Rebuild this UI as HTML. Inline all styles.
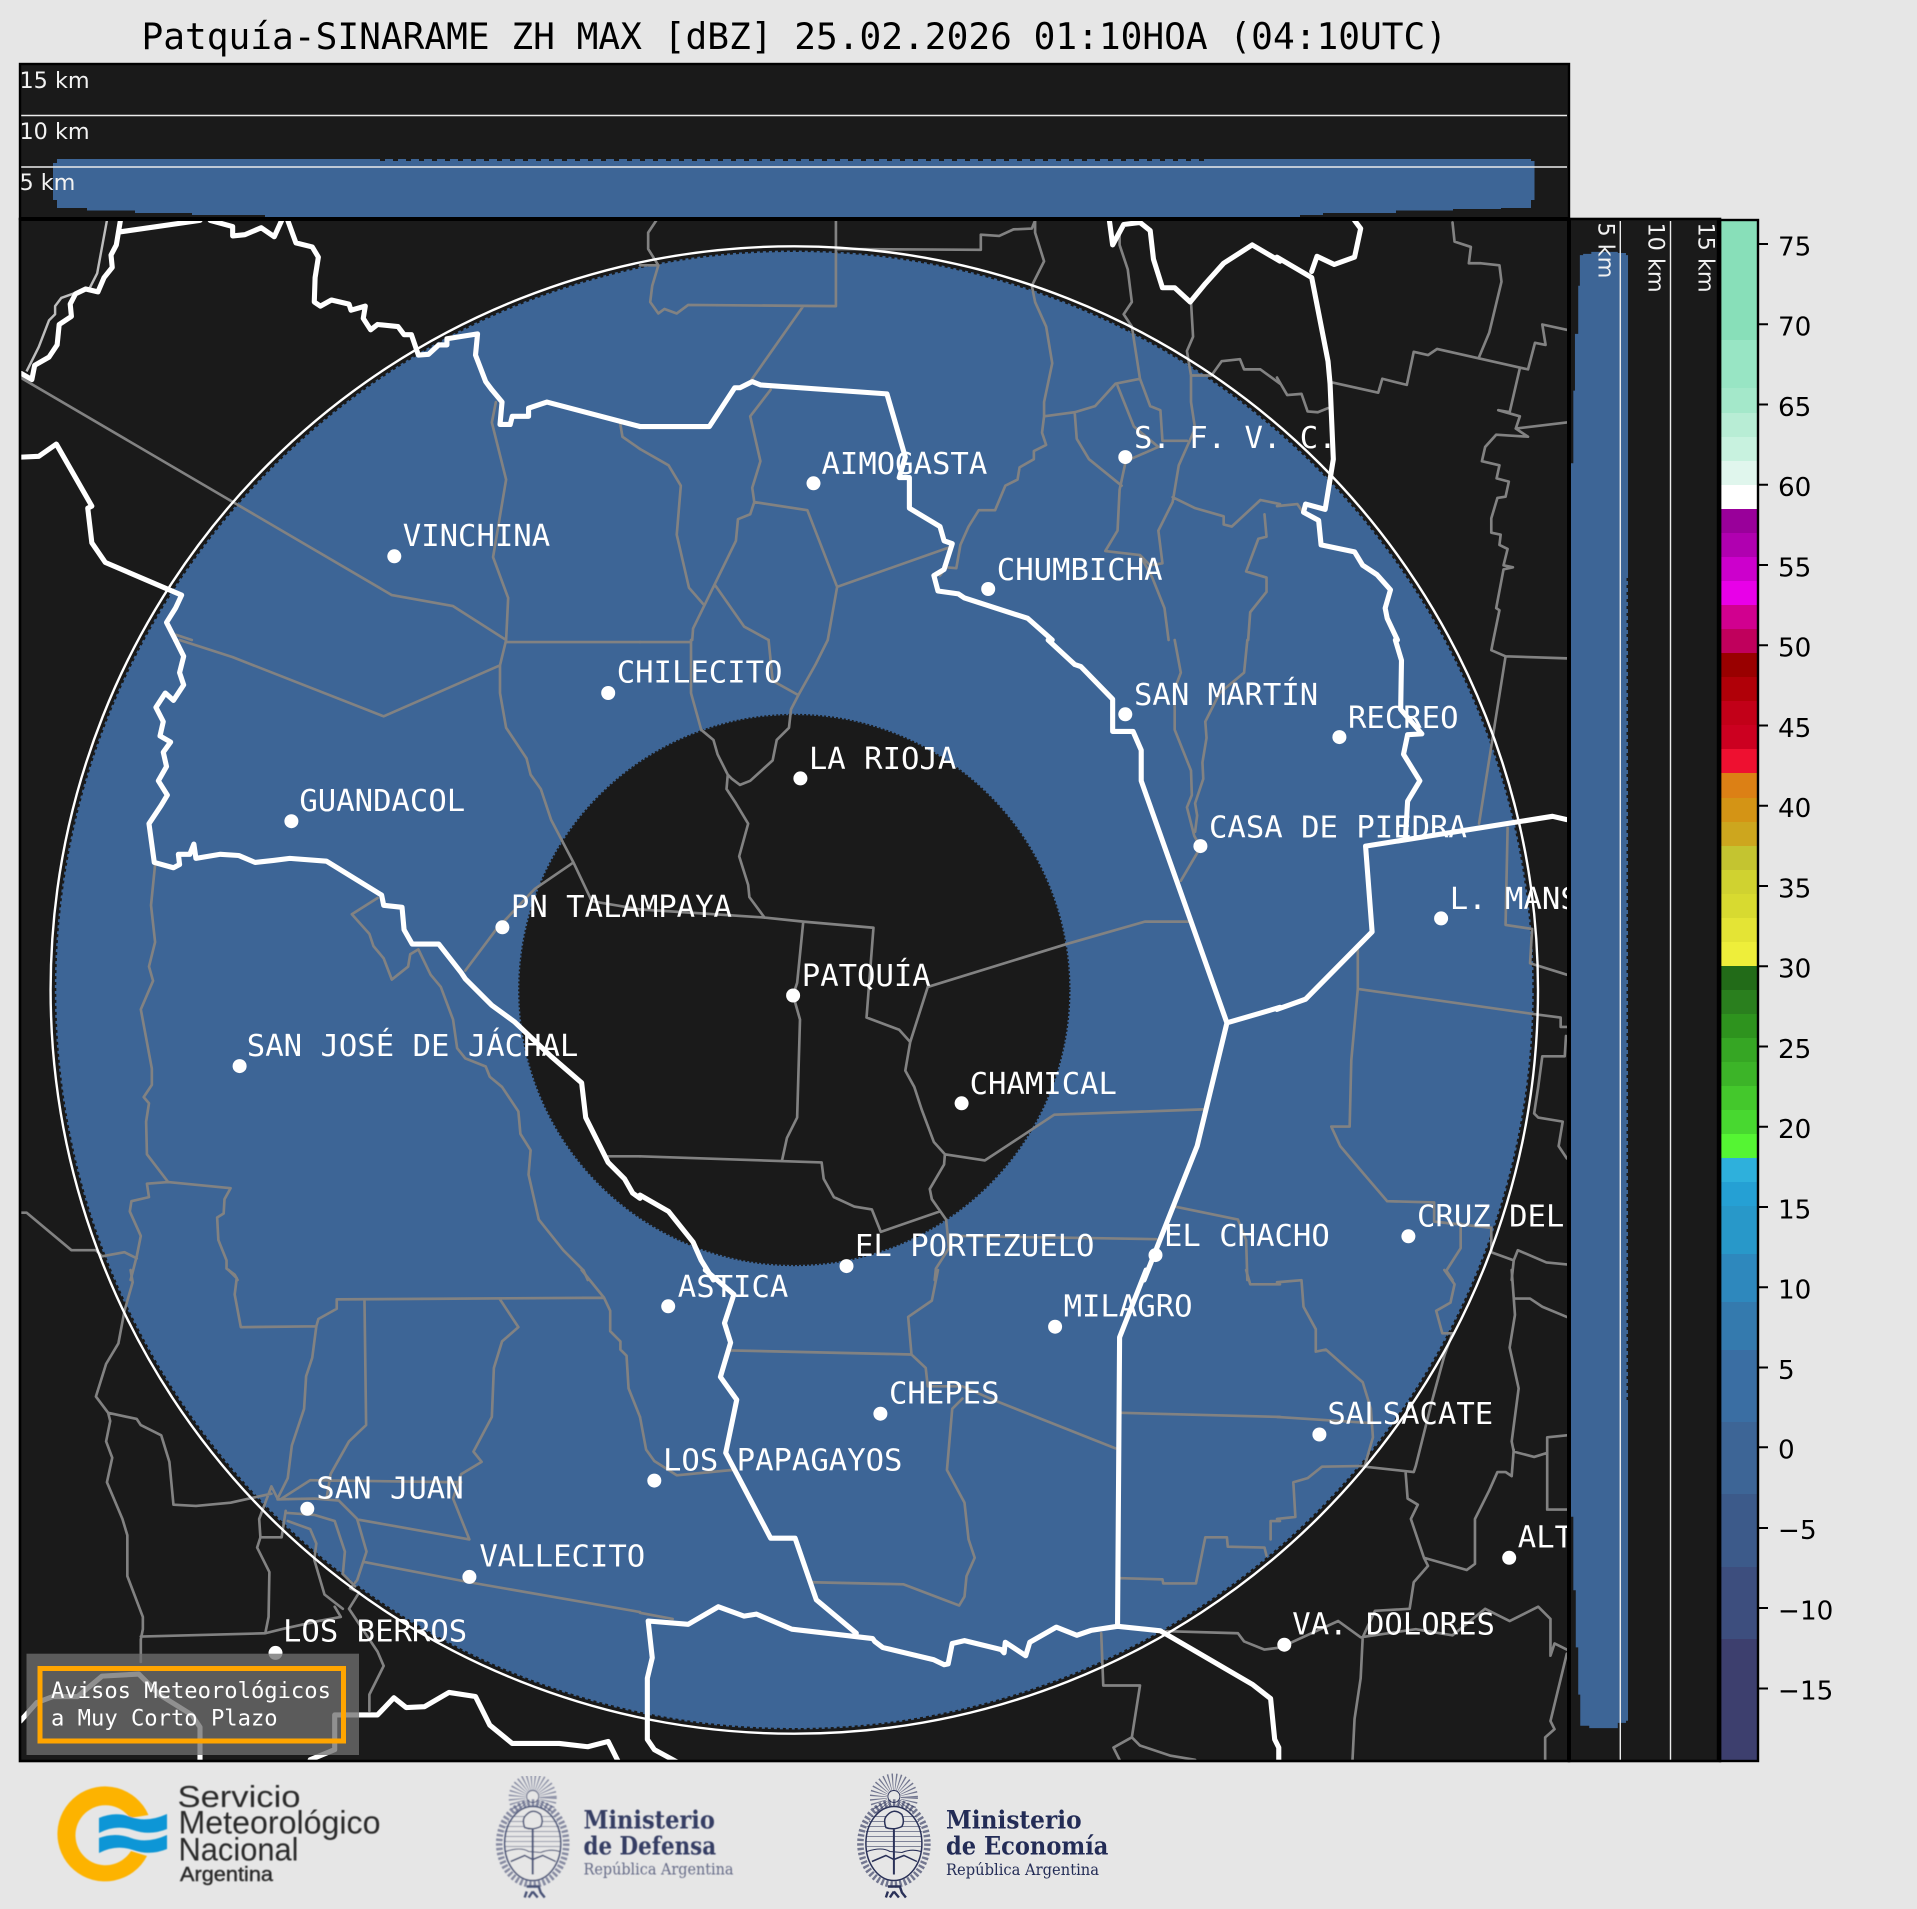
<!DOCTYPE html>
<html><head><meta charset="utf-8"><style>
html,body{margin:0;padding:0;background:#e6e6e6;width:1917px;height:1909px;overflow:hidden}
svg{display:block}
.w{fill:none;stroke:#fff;stroke-width:12.5;stroke-linejoin:round;stroke-linecap:round}
.g{fill:none;stroke:#828282;stroke-width:6.5;stroke-linejoin:round;stroke-linecap:round}
.l{font-family:"DejaVu Sans Mono","Liberation Mono",monospace;font-size:30.6px;fill:#fff}
.k{font-family:"DejaVu Sans","Liberation Sans",sans-serif;font-size:22.3px;fill:#f2f2f2}
.t{font-family:"DejaVu Sans","Liberation Sans",sans-serif;font-size:26.2px;fill:#000}
.s{font-family:"DejaVu Serif","Liberation Serif",serif;font-weight:bold}
</style></head><body>
<svg xmlns="http://www.w3.org/2000/svg" width="1917" height="1909" viewBox="0 0 1917 1909">
<defs>
<clipPath id="mc"><rect x="21" y="221" width="1547" height="1539"/></clipPath>
<clipPath id="tc"><rect x="21" y="65" width="1547" height="153"/></clipPath>
<clipPath id="sc"><rect x="1570" y="221" width="150" height="1539"/></clipPath>
<filter id="b1" x="-5%" y="-5%" width="110%" height="110%"><feGaussianBlur stdDeviation="0.5"/></filter>
<g id="seal" fill="none" stroke="currentColor">
<circle cx="0" cy="-46" r="15.5" stroke-width="17" stroke-dasharray="1 2.1" opacity=".62"/>
<circle cx="0" cy="-47" r="6" fill="#e6e6e6" stroke-width=".9"/>
<ellipse cx="0" cy="0" rx="33.5" ry="41" stroke-width="6.5" stroke-dasharray="2.4 2.2" opacity=".62"/>
<ellipse cx="0" cy="0" rx="28" ry="37" fill="#e6e6e6" stroke-width="1.5"/>
<path d="M-22,-27H22M-25,-22H25M-27,-17H27M-28,-12H28M-28,-7H28M-28,-2H28M-27,3H27" stroke-width=".9" opacity=".55"/>
<path d="M-27,8Q-12,3 -4,8L8,9Q18,5 27,8" stroke-width="1.1"/>
<path d="M-22,18L-8,12L0,16L10,12L23,18" stroke-width="1.5"/>
<path d="M0,-14V31" stroke-width="2"/>
<path d="M-8,-16Q-11,-24 -7,-28Q0,-36 8,-29Q11,-22 8,-17Q0,-13 -8,-16Z" fill="#e6e6e6" stroke-width="1.5"/>
<path d="M-6,43H6L8,49L12,54M-8,54L-6,48M0,48L-4,54M0,48L5,54" stroke-width="2.4"/>
</g>
</defs>
<rect width="1917" height="1909" fill="#e6e6e6"/>
<text x="141.5" y="49" font-family="DejaVu Sans Mono,Liberation Mono,monospace" font-size="36.15" fill="#000">Patquía-SINARAME ZH MAX [dBZ] 25.02.2026 01:10HOA (04:10UTC)</text>

<!-- top section -->
<rect x="20" y="64" width="1549" height="155" fill="#1a1a1a"/>
<g clip-path="url(#tc)">
<path d="M57,159H1531V161H1534.5V200H1531V208H1501V209H1453V210.5H1396V213H1323V215H1300V217H265V215H192V213H135V210.5H87V208H57V200H53V163H57Z" fill="#3d6596"/>
<path d="M380,160H1207" stroke="#1a1a1a" stroke-width="2" stroke-dasharray="5 8"/>
<path d="M21,115.5H1567M21,167H1567" stroke="#ececec" stroke-width="1.4"/>
<text class="k" x="19.5" y="88">15 km</text><text class="k" x="19.5" y="139">10 km</text><text class="k" x="19.5" y="190">5 km</text>
</g>

<!-- map -->
<rect x="20" y="219" width="1549" height="1542" fill="#1a1a1a"/>
<g clip-path="url(#mc)">
<circle cx="794.3" cy="990" r="739.5" fill="#3d6596"/>
<circle cx="794.3" cy="990" r="739.5" fill="none" stroke="#1a1a1a" stroke-width="3" stroke-dasharray="3 3"/>
<circle cx="794.3" cy="990" r="275" fill="#1a1a1a"/>
<circle cx="794.3" cy="990" r="275.5" fill="none" stroke="#1a1a1a" stroke-width="1.4" stroke-dasharray="2 2"/>

<g transform="translate(0,0) scale(.40816)">
<path class="g" d="M50,925L960,1458L1110,1485L1240,1568M1215,985L1205,1035L1240,1175L1208,1365L1245,1465L1240,1568M1520,1040L1525,1070L1568,1100M430,1555L470,1568"/>
<path d="M262,540L238,670L220,705L150,730L135,750L135,770L120,785L95,850L65,910" fill="none" stroke="#bdbdbd" stroke-width="6" stroke-linejoin="round"/>
</g>
<g transform="translate(640,0) scale(.40816)">
<path class="g" d="M0,650L45,650L30,700L25,740L45,768L60,757L90,768L118,747L480,750L480,540M40,540L20,570L20,610L45,650M400,750L270,935M480,610L835,612L835,575L880,578L915,562L960,560L968,540L968,570L990,640L960,700L968,740L995,800L1010,890L990,985L990,1020L985,1060L995,1090L965,1105L965,1125L930,1145L925,1175L895,1190L870,1250L830,1250L805,1290L785,1335L775,1392L750,1390L735,1410M990,1020L1065,1010L1115,995L1165,940L1225,928L1205,800L1185,770L1205,740L1195,660L1175,600L1175,570M1225,928L1250,995L1275,1005L1280,1080L1340,1080M1350,740L1355,825L1340,860L1350,920L1350,985L1360,1050L1340,1095L1320,1140L1310,1200L1305,1230L1270,1300L1280,1380L1250,1385L1225,1360L1140,1350L1170,1300L1175,1200L1190,1130M1065,1010L1070,1075L1100,1125L1180,1190M1170,945L1210,1045L1270,1095L1190,1130M1350,920L1400,920L1425,885L1470,880L1480,905L1520,905L1568,940M1305,1218L1360,1245L1430,1265L1430,1285L1450,1290L1520,1225L1568,1235M1530,1260L1535,1315L1515,1320L1485,1400L1535,1415L1535,1450L1495,1500L1490,1568M1225,1360L1255,1415L1285,1490L1295,1568M0,1100L70,1140L100,1190L90,1310L120,1440L155,1480M320,955L270,1020L295,1130L275,1195L280,1230L410,1250L483,1438L755,1342M280,1230L270,1260L240,1272L235,1325L130,1540L128,1568M185,1435L255,1535L315,1568M483,1438L460,1568"/>
</g>
<g transform="translate(1277,0) scale(.40816)">
<path class="g" d="M430,545L435,592L475,605L470,645L500,645L545,650L550,690L520,815L495,875M135,937L248,962L258,928L318,943L335,862L370,870L392,855L615,905L632,840L658,845L650,795L710,808M595,902L570,1010L542,1005L595,1020L585,1050L710,1035M585,1050L615,1070L537,1065L510,1095L502,1130L545,1140L538,1172L568,1180L560,1217L540,1220L525,1270L525,1305L548,1310L545,1335L565,1345L555,1385L578,1390L555,1395L537,1490L545,1495L530,1568M0,925L25,968L60,965L75,1008L100,1010L125,1000M0,1240L50,1235L60,1250"/>
</g>
<g transform="translate(0,640) scale(.40816)">
<path class="g" d="M440,0L570,42L940,187L1225,62M1240,5L1568,5M1240,0L1225,62L1225,130L1240,215L1290,290L1300,330L1325,365L1350,440L1405,545L1450,640L1568,660M1405,545L1310,610L1215,710L1140,810M1490,1265L1568,1265M925,632L862,672L905,720L915,750L940,780L960,832L1000,800L1005,770L1025,758L1055,820L1080,850L1110,930L1120,1000L1140,1025L1190,1045L1200,1070L1230,1095L1270,1155L1275,1210L1300,1250L1295,1310L1320,1420L1380,1495L1430,1545L1440,1568M380,550L370,650L380,740L365,800L375,835L345,905L372,1050L372,1090L352,1120L365,1135L358,1180L360,1260L412,1328L565,1343L550,1370L548,1405L532,1415L535,1470L555,1520L555,1540L575,1555L582,1568M412,1328L360,1332L365,1365L322,1375L318,1400L345,1460L335,1510L320,1568M52,1403L65,1403L175,1495L235,1495L250,1510L305,1500L335,1515"/>
</g>
<g transform="translate(640,640) scale(.40816)">
<path class="g" d="M0,5H125M125,0L125,130L150,220L180,245L190,280L215,330L212,365L235,400L265,450L243,530L265,600L268,630L305,680M315,0L325,100L388,135L430,60L460,0M388,135L370,170L365,215L335,245L325,295L270,345L245,355L225,340L215,330M0,660L305,680L400,690L572,705L555,925L635,955L662,985M400,690L385,840L375,870L392,930L385,1170L360,1220L348,1275M0,1265L445,1280L450,1320L475,1365L525,1388L568,1395L590,1450L735,1400M705,850L662,985L650,1055L672,1095L690,1150L720,1230L747,1260L745,1285L710,1345L715,1370L750,1420L757,1490L725,1540L722,1568M705,850L1045,745L1237,690L1345,690M747,1260L845,1275L1015,1163L1380,1150M770,1460L1265,1468M1310,1388L1465,1420L1485,1470L1488,1568M1325,590L1372,510M1310,0L1325,80L1310,120L1310,220L1350,320L1352,380L1340,410L1358,480L1372,505M1488,0L1480,80L1420,130L1385,200L1388,240L1378,300L1380,340L1360,400L1365,430L1360,470"/>
</g>
<g transform="translate(1277,640) scale(.40816)">
<path class="g" d="M530,0L525,25L560,40L710,45M560,40L495,450M565,460L560,698L625,708L620,792L710,820M198,760L198,855L640,918L695,925L695,948L710,948M198,855L182,1030L178,1192L133,1192L155,1240L210,1305L270,1375L385,1378L385,1425L525,1440L525,1500L580,1520L590,1495L660,1525L710,1530M450,1430L450,1490L415,1545L430,1568M708,970L705,1020L650,1020L640,1095L630,1160L640,1170L700,1180L690,1240L710,1270M580,1520L575,1568"/>
</g>
<g transform="translate(0,1270) scale(.40816)">
<path class="g" d="M1425,0L1480,68M320,0L325,30L305,100L290,180L260,230L235,310L265,350L270,370L260,420L275,460L262,520L300,610L312,650L312,750L350,850L350,880L345,905L345,960M265,350L335,365L345,380L395,405L415,470L425,575L480,578L565,570L665,548M560,0L580,20L575,60L590,140L775,138L780,120L825,95L825,72L1480,68L1495,100L1495,150L1520,175L1520,195L1535,210L1540,290L1568,360M893,75L897,380L855,420L810,500L800,560M775,138L765,215L750,260L745,340L715,430L705,510L680,560L665,530L650,570L635,610L638,655L630,680L660,740L658,850L650,890L345,898M650,890L690,880L780,860L835,850L820,825M1225,72L1270,140L1230,175L1210,240L1205,360L1160,445L1180,470L1130,500L1110,560L1150,660L880,612M690,560L760,515L1130,520M680,562L770,560L830,565L875,610L898,690L875,760L858,780L880,790L855,830L925,935L940,970L905,1040L905,1080M700,595L770,600L820,615L845,690L840,745L870,775M705,615L760,635L775,670L770,710L795,795L840,830M640,655L690,655L700,590M890,715L1150,765L1568,838"/>
</g>
<g transform="translate(640,1270) scale(.40816)">
<path class="g" d="M0,360L15,440L35,468L90,503L225,490M222,197L665,207L700,240L705,285L790,285L870,320L1165,437M790,315L765,340L752,490L795,570L805,660L820,705L800,750L795,800L782,822L645,770L420,765M730,0L715,75L657,115L665,205M1180,350L1568,360M1178,755L1280,758L1282,768L1362,768L1385,655L1438,655L1440,678L1530,680L1535,700M1485,0L1495,35L1568,35M1545,660L1545,615L1568,615M1130,890L1135,1018L1225,1018L1205,1145L1160,1170L1175,1200M1205,1145L1225,1165L1300,1190L1360,1200M1290,885L1465,890L1480,910L1530,930L1568,925M0,840L80,855"/>
</g>
<g transform="translate(1277,1270) scale(.40816)">
<path class="g" d="M0,30L60,25L65,90L95,145L95,200L120,195L210,275L230,340L235,410L215,480M0,360L230,375M410,0L435,35L425,80L390,100L405,155L430,155L410,210L380,320L340,480L335,495L215,482M215,480L110,482L75,510L40,520L45,605L0,610M315,495L320,560L345,575L328,610L360,705L465,735L485,720L485,610L520,540L540,495L560,495L575,505L580,440M575,0L583,110L570,190L592,290L575,420L580,445M582,70L620,70L650,90L710,115M580,445L630,458L662,448L662,410L710,405M662,448L662,587L710,587M360,705L370,725L335,765L325,830L240,835L210,900L205,1000L190,1100L185,1200M30,915L150,860L205,900L340,880L400,890L430,895L510,830L570,860L640,825L670,855L670,945L680,915L710,930M710,940L670,1105L680,1125L657,1145L657,1200"/>
</g>

<circle cx="794.3" cy="990" r="743.7" fill="none" stroke="#fff" stroke-width="2.4"/>

<!-- thick white borders -->
<g transform="translate(0,0) scale(.40816)">
<path class="w" d="M295,540L285,600L272,625L275,655L255,680L240,715L210,708L185,720L172,745L175,775L145,795L140,845L120,875L85,895L78,930L52,915M295,568L490,540M515,540L570,555L570,578L600,575L640,558L672,580L690,540M705,540L725,595L765,605L780,630L772,680L770,740L785,750L812,735L855,745L860,760L895,750L890,780L908,808L925,795L975,800L990,820L1008,820L1025,870L1050,868L1075,845L1095,845L1095,830L1170,818L1165,870L1190,935L1205,955L1230,985L1225,1040L1250,1040L1255,1020L1295,1020L1295,1000L1340,985L1568,1045M52,1120L95,1118L138,1088L225,1240L215,1245L225,1330L258,1378L445,1458L430,1490L408,1525L430,1568"/>
</g>
<g transform="translate(640,0) scale(.40816)">
<path class="w" d="M0,1045L170,1045L232,950L245,950L275,935L295,943L605,965L650,1120L635,1170L660,1170L660,1245L735,1290L745,1325L765,1332L745,1395L720,1410L730,1448L780,1455L795,1465L950,1515L1010,1568M1150,540L1158,600L1185,550L1225,545L1250,565L1258,635L1280,705L1310,705L1348,740L1385,695L1430,645L1500,600L1568,640"/>
</g>
<g transform="translate(1277,0) scale(.40816)">
<path class="w" d="M190,540L205,560L190,630L140,648L98,628L85,665M0,630L85,680L125,885L130,940L138,1125L118,1248L70,1235L65,1255L102,1275L108,1335L190,1352L210,1385L245,1408L278,1445L265,1490L270,1515L295,1568"/>
</g>
<g transform="translate(0,640) scale(.40816)">
<path class="w" d="M430,0L450,40L440,80L450,110L425,148L405,130L382,165L400,200L392,235L418,250L400,275L408,310L388,345L410,380L395,405L365,450L378,545L425,558L440,550L437,525L465,525L475,500L480,535L540,525L585,528L625,545L670,540L710,535L800,542L935,625L940,650L985,655L990,710L1010,745L1075,745L1130,815L1140,830L1205,895L1260,935L1350,1020L1425,1085L1435,1170L1490,1280L1530,1320L1550,1355L1568,1368"/>
</g>
<g transform="translate(640,640) scale(.40816)">
<path class="w" d="M0,1360L70,1400L130,1475L150,1520L180,1568M1000,0L1065,60L1080,65L1158,145L1158,224L1208,224L1228,270L1228,345L1438,938L1568,900M1438,938L1365,1240L1235,1568"/>
</g>
<g transform="translate(1277,640) scale(.40816)">
<path class="w" d="M0,905L70,880L233,715L217,505L675,432L710,440M290,0L305,50L303,170L355,230L320,232L310,280L350,345L320,395L315,480"/>
</g>
<g transform="translate(640,1270) scale(.40816)">
<path class="w" d="M160,0L230,60L207,130L222,178L197,262L237,318L210,448L320,657L380,657L432,808L530,890M1240,0L1175,165L1170,870M20,860L118,868L192,825L255,848L285,843L372,880L570,903L575,910L595,925L720,955L745,967L755,965L765,915L795,908L885,930L892,938L895,912L945,945L955,912L1020,875L1070,895L1105,883L1170,873L1275,884L1500,1015L1545,1050L1555,1150L1565,1170L1565,1210M20,860L30,950L18,1000L18,1150L35,1175L90,1205"/>
</g>
<g transform="translate(0,1270) scale(.40816)">
<path class="w" d="M50,1105L90,1060L130,1045L190,1045L250,995L340,990L390,1040L470,1090L490,1120L490,1205M760,1200L820,1175L820,1090L925,1090L965,1048L995,1072L1040,1070L1100,1035L1165,1045L1200,1115L1255,1160L1330,1160L1370,1160L1440,1168L1490,1155L1515,1205"/>
</g>

<!-- cities -->
<g fill="#fff">
<circle cx="394.3" cy="556.3" r="7"/><circle cx="813.5" cy="483.3" r="7"/><circle cx="1125.3" cy="457.1" r="7"/><circle cx="988.2" cy="589" r="7"/><circle cx="608.2" cy="693" r="7"/><circle cx="800.4" cy="778.4" r="7"/><circle cx="1125.3" cy="714.3" r="7"/><circle cx="1339.4" cy="737.1" r="7"/><circle cx="1200.4" cy="846.1" r="7"/><circle cx="1441.1" cy="918.4" r="7"/><circle cx="291.4" cy="821.2" r="7"/><circle cx="502.4" cy="927.3" r="7"/><circle cx="793.1" cy="995.5" r="7"/><circle cx="239.6" cy="1066.1" r="7"/><circle cx="961.6" cy="1103.3" r="7"/><circle cx="846.5" cy="1266.1" r="7"/><circle cx="1155.5" cy="1255.1" r="7"/><circle cx="1408.4" cy="1236.3" r="7"/><circle cx="668.2" cy="1306.3" r="7"/><circle cx="1055.1" cy="1326.7" r="7"/><circle cx="880.4" cy="1413.7" r="7"/><circle cx="1319.4" cy="1434.5" r="7"/><circle cx="654.3" cy="1480.6" r="7"/><circle cx="307.3" cy="1508.8" r="7"/><circle cx="469.4" cy="1576.9" r="7"/><circle cx="1509.2" cy="1557.8" r="7"/><circle cx="1284.3" cy="1644.7" r="7"/><circle cx="275.5" cy="1652.9" r="7"/>
</g>
<text class="l" x="402.8" y="546">VINCHINA</text>
<text class="l" x="821.5" y="474">AIMOGASTA</text>
<text class="l" x="1134" y="448">S. F. V. C.</text>
<text class="l" x="996.8" y="580">CHUMBICHA</text>
<text class="l" x="616.7" y="682.5">CHILECITO</text>
<text class="l" x="808.9" y="769">LA RIOJA</text>
<text class="l" x="1134" y="705">SAN MARTÍN</text>
<text class="l" x="1348" y="728">RECREO</text>
<text class="l" x="1209" y="837.5">CASA DE PIEDRA</text>
<text class="l" x="1449.8" y="909">L. MANSILLA</text>
<text class="l" x="299.4" y="811">GUANDACOL</text>
<text class="l" x="510.9" y="917">PN TALAMPAYA</text>
<text class="l" x="801.8" y="986">PATQUÍA</text>
<text class="l" x="246.8" y="1056">SAN JOSÉ DE JÁCHAL</text>
<text class="l" x="969.6" y="1094">CHAMICAL</text>
<text class="l" x="855" y="1256">EL PORTEZUELO</text>
<text class="l" x="1164" y="1246">EL CHACHO</text>
<text class="l" x="1417" y="1226.5">CRUZ DEL EJE</text>
<text class="l" x="677.8" y="1297">ASTICA</text>
<text class="l" x="1063.6" y="1316.5">MILAGRO</text>
<text class="l" x="889" y="1403.5">CHEPES</text>
<text class="l" x="1327.4" y="1424">SALSACATE</text>
<text class="l" x="663" y="1470.5">LOS PAPAGAYOS</text>
<text class="l" x="316.3" y="1498.5">SAN JUAN</text>
<text class="l" x="479.4" y="1566.5">VALLECITO</text>
<text class="l" x="1517.8" y="1547.5">ALTA GRACIA</text>
<text class="l" x="1292.3" y="1634.5">VA. DOLORES</text>
<text class="l" x="283" y="1641.5">LOS BERROS</text>

<!-- avisos box -->
<rect x="26.5" y="1653.7" width="332.5" height="101.3" fill="#6f6f6f" fill-opacity=".77"/>
<rect x="40" y="1668.5" width="303.5" height="72.5" fill="none" stroke="#ffa500" stroke-width="5"/>
<text x="51" y="1698" font-family="DejaVu Sans Mono,Liberation Mono,monospace" font-size="22.15" fill="#fff">Avisos Meteorológicos</text>
<text x="51" y="1725.5" font-family="DejaVu Sans Mono,Liberation Mono,monospace" font-size="22.15" fill="#fff">a Muy Corto Plazo</text>
</g>

<!-- side section -->
<rect x="1569" y="219" width="151" height="1542" fill="#1a1a1a"/>
<g clip-path="url(#sc)">
<g transform="translate(1277,0) scale(.40816)">
<path d="M742,630V625H750V622H770V617H835V620H855V625H860V4216H855V4221H835V4234H765V4228H743V4152H738V4036H732V3896H726V3716H720V1135H726V957H730V818H738V700H742Z" fill="#3d6596"/>
</g>
<path d="M1628,578V1402" stroke="#1a1a1a" stroke-width="3" stroke-dasharray="3 4"/>
<path d="M1620.3,220V1760M1670.5,220V1760" stroke="#ececec" stroke-width="1.4"/>
<text class="k" transform="translate(1598.5,222.5) rotate(90)">5 km</text>
<text class="k" transform="translate(1648.5,222.5) rotate(90)">10 km</text>
<text class="k" transform="translate(1698.5,222.5) rotate(90)">15 km</text>
</g>

<!-- colorbar -->
<g shape-rendering="crispEdges">
<rect x="1720.7" y="221" width="37" height="119" fill="#88dfb9"/>
<rect x="1720.7" y="340" width="37" height="48" fill="#98e5c4"/>
<rect x="1720.7" y="388" width="37" height="25" fill="#a4e8ca"/>
<rect x="1720.7" y="413" width="37" height="24" fill="#b8edd5"/>
<rect x="1720.7" y="437" width="37" height="24" fill="#c8f2df"/>
<rect x="1720.7" y="461" width="37" height="24" fill="#e0f6ed"/>
<rect x="1720.7" y="485" width="37" height="24" fill="#ffffff"/>
<rect x="1720.7" y="509" width="37" height="24" fill="#99009a"/>
<rect x="1720.7" y="533" width="37" height="24" fill="#b000b0"/>
<rect x="1720.7" y="557" width="37" height="24" fill="#cc00cc"/>
<rect x="1720.7" y="581" width="37" height="24" fill="#e800e8"/>
<rect x="1720.7" y="605" width="37" height="24" fill="#d1008f"/>
<rect x="1720.7" y="629" width="37" height="24" fill="#c0005c"/>
<rect x="1720.7" y="653" width="37" height="24" fill="#990000"/>
<rect x="1720.7" y="677" width="37" height="24" fill="#b00008"/>
<rect x="1720.7" y="701" width="37" height="24" fill="#c20018"/>
<rect x="1720.7" y="725" width="37" height="24" fill="#cc0020"/>
<rect x="1720.7" y="749" width="37" height="24" fill="#ee1030"/>
<rect x="1720.7" y="773" width="37" height="25" fill="#dc8015"/>
<rect x="1720.7" y="798" width="37" height="24" fill="#d49415"/>
<rect x="1720.7" y="822" width="37" height="24" fill="#cda61e"/>
<rect x="1720.7" y="846" width="37" height="24" fill="#c4c430"/>
<rect x="1720.7" y="870" width="37" height="24" fill="#d0d230"/>
<rect x="1720.7" y="894" width="37" height="24" fill="#d8da30"/>
<rect x="1720.7" y="918" width="37" height="24" fill="#e4e435"/>
<rect x="1720.7" y="942" width="37" height="24" fill="#eeee3a"/>
<rect x="1720.7" y="966" width="37" height="24" fill="#226b18"/>
<rect x="1720.7" y="990" width="37" height="24" fill="#2a7f1e"/>
<rect x="1720.7" y="1014" width="37" height="24" fill="#2e931e"/>
<rect x="1720.7" y="1038" width="37" height="24" fill="#36a624"/>
<rect x="1720.7" y="1062" width="37" height="24" fill="#3cb428"/>
<rect x="1720.7" y="1086" width="37" height="24" fill="#44c82c"/>
<rect x="1720.7" y="1110" width="37" height="24" fill="#48d830"/>
<rect x="1720.7" y="1134" width="37" height="24" fill="#55f533"/>
<rect x="1720.7" y="1158" width="37" height="24" fill="#2eb0dc"/>
<rect x="1720.7" y="1182" width="37" height="24" fill="#25a0d4"/>
<rect x="1720.7" y="1206" width="37" height="48" fill="#2898c9"/>
<rect x="1720.7" y="1254" width="37" height="48" fill="#2e88bd"/>
<rect x="1720.7" y="1302" width="37" height="48" fill="#347aae"/>
<rect x="1720.7" y="1350" width="37" height="72" fill="#3a6ea3"/>
<rect x="1720.7" y="1422" width="37" height="72" fill="#3d6596"/>
<rect x="1720.7" y="1494" width="37" height="73" fill="#3c5a8a"/>
<rect x="1720.7" y="1567" width="37" height="72" fill="#3d4e7e"/>
<rect x="1720.7" y="1639" width="37" height="122" fill="#3d3f6e"/>
</g>
<path d="M1759,244H1768M1759,324.2H1768M1759,404.5H1768M1759,484.8H1768M1759,565H1768M1759,645.3H1768M1759,725.5H1768M1759,805.8H1768M1759,886H1768M1759,966.3H1768M1759,1046.5H1768M1759,1126.8H1768M1759,1207H1768M1759,1287.3H1768M1759,1367.5H1768M1759,1447.3H1768M1759,1528H1768M1759,1608H1768M1759,1688.5H1768" stroke="#000" stroke-width="2"/>
<text class="t" x="1778" y="255.5">75</text><text class="t" x="1778" y="335.5">70</text><text class="t" x="1778" y="415.8">65</text><text class="t" x="1778" y="496">60</text><text class="t" x="1778" y="576.3">55</text><text class="t" x="1778" y="656.5">50</text><text class="t" x="1778" y="736.8">45</text><text class="t" x="1778" y="817">40</text><text class="t" x="1778" y="897.3">35</text><text class="t" x="1778" y="977.5">30</text><text class="t" x="1778" y="1057.8">25</text><text class="t" x="1778" y="1138">20</text><text class="t" x="1778" y="1218.3">15</text><text class="t" x="1778" y="1298.5">10</text><text class="t" x="1778" y="1378.8">5</text><text class="t" x="1778" y="1458.5">0</text><text class="t" x="1778" y="1539.2">−5</text><text class="t" x="1778" y="1619.5">−10</text><text class="t" x="1778" y="1699.7">−15</text>

<!-- spines -->
<g fill="none" stroke="#000">
<rect x="20" y="64" width="1549" height="155" stroke-width="2.4"/>
<rect x="20" y="219" width="1549" height="1542" stroke-width="2.6"/>
<rect x="1569" y="219" width="151" height="1542" stroke-width="2.6"/>
<rect x="1720" y="220" width="38" height="1541" stroke-width="2.4"/>
</g>
<path d="M20,219H1569M1569,219V1761" stroke="#000" stroke-width="4" fill="none"/>
<path d="M1718.5,220V1761" stroke="#000" stroke-width="3.5" fill="none"/>

<!-- SMN logo -->
<g filter="url(#b1)">
<path d="M148.5,1815A47.5,47.5 0 1 0 147,1856L131,1851A30,30 0 1 1 130,1818Z" fill="#fdb300"/>
<path d="M99,1818Q115,1811 131,1817T167,1814V1829Q150,1836 133,1830T99,1833Z" fill="#0f96d6"/>
<path d="M99,1838Q115,1832 131,1838T167,1835V1849Q150,1856 133,1850T99,1853Z" fill="#0f96d6"/>
<g font-family="Liberation Sans,sans-serif" fill="#2b2b2b">
<text x="177.5" y="1807" font-size="31" textLength="123" lengthAdjust="spacingAndGlyphs">Servicio</text>
<text x="178.5" y="1833.5" font-size="32" textLength="202" lengthAdjust="spacingAndGlyphs">Meteorológico</text>
<text x="178.5" y="1860.5" font-size="32" textLength="120" lengthAdjust="spacingAndGlyphs">Nacional</text>
<text x="180" y="1881" font-size="20" stroke="#2b2b2b" stroke-width=".4" textLength="93" lengthAdjust="spacingAndGlyphs">Argentina</text>
</g>
</g>

<!-- Ministerio de Defensa -->
<g filter="url(#b1)">
<use href="#seal" x="532.7" y="1843.5" color="#4a5377"/>
<g fill="#343c63">
<text class="s" x="583.5" y="1828.4" font-size="25.5" textLength="131.4" lengthAdjust="spacingAndGlyphs">Ministerio</text>
<text class="s" x="583.5" y="1854.5" font-size="25.5" textLength="132.6" lengthAdjust="spacingAndGlyphs">de Defensa</text>
<text x="583.5" y="1874.5" font-family="DejaVu Serif,serif" font-size="15.5" fill="#666c88" textLength="150" lengthAdjust="spacingAndGlyphs">República Argentina</text>
</g>
</g>

<!-- Ministerio de Economía -->
<use href="#seal" x="893.9" y="1843.5" color="#2a3158"/>
<g fill="#232c56">
<text class="s" x="946" y="1828.4" font-size="25.5" textLength="135.6" lengthAdjust="spacingAndGlyphs">Ministerio</text>
<text class="s" x="946" y="1854.5" font-size="25.5" textLength="162.4" lengthAdjust="spacingAndGlyphs">de Economía</text>
<text x="946" y="1875" font-family="DejaVu Serif,serif" font-size="15.5" textLength="153" lengthAdjust="spacingAndGlyphs">República Argentina</text>
</g>
</svg>
</body></html>
